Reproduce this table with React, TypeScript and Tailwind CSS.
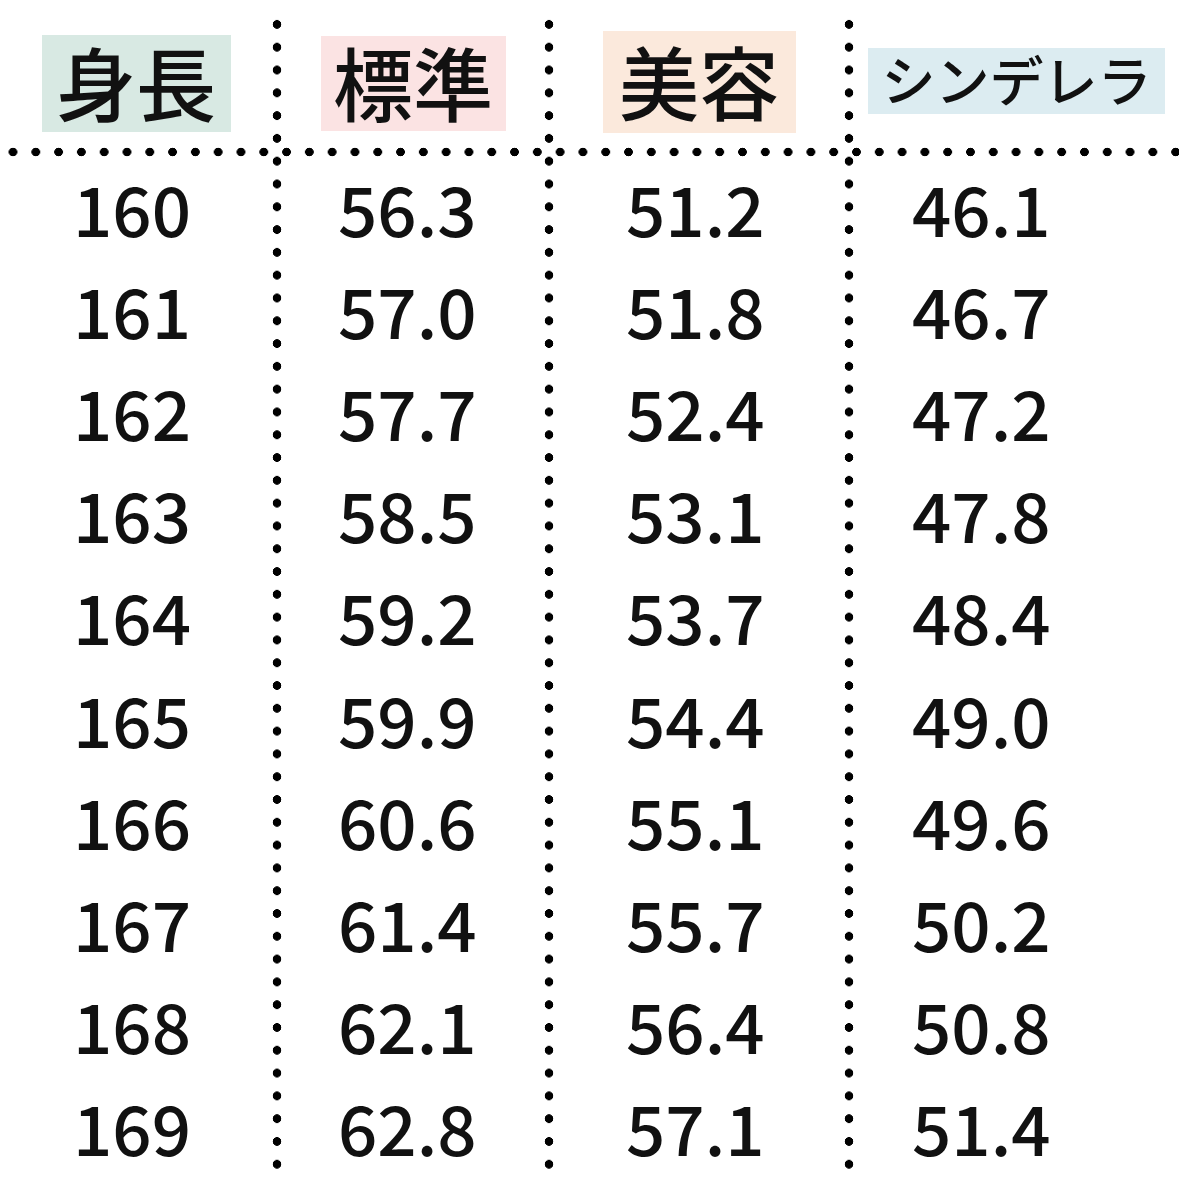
const rows = [
  ['160', '56.3', '51.2', '46.1'],
  ['161', '57.0', '51.8', '46.7'],
  ['162', '57.7', '52.4', '47.2'],
  ['163', '58.5', '53.1', '47.8'],
  ['164', '59.2', '53.7', '48.4'],
  ['165', '59.9', '54.4', '49.0'],
  ['166', '60.6', '55.1', '49.6'],
  ['167', '61.4', '55.7', '50.2'],
  ['168', '62.1', '56.4', '50.8'],
  ['169', '62.8', '57.1', '51.4'],
]

// left padding per data column so the numbers sit where the reference has them
const cellPad = ['pl-[73px]', 'pl-[56px]', 'pl-[72px]', 'pl-[58px]']

const vDots =
  'row-span-full mt-[12.6px] bg-[radial-gradient(circle,#000_4px,transparent_4.6px)] bg-[length:10px_22.8px] bg-repeat-y'

export default function App() {
  return (
    <div className="h-[1179px] w-[1179px] overflow-hidden bg-white text-[#111] font-['Noto_Sans_CJK_JP','Noto_Sans',sans-serif]">
      <div className="grid h-full grid-cols-[272px_10px_262px_10px_290px_10px_1fr] grid-rows-[147px_10px_repeat(10,102.2px)]">
        {/* dotted separators */}
        <div className={`col-start-2 ${vDots}`} />
        <div className={`col-start-4 ${vDots}`} />
        <div className={`col-start-6 ${vDots}`} />
        <div className="col-span-full row-start-2 bg-[radial-gradient(circle,#000_4px,transparent_4.6px)] bg-[length:22.8px_10px] bg-[position:1.6px_0] bg-repeat-x" />

        {/* ── Header ─────────────────────────────── */}
        <div className="flex items-center justify-center pt-[20px]">
          <div className="flex h-[97px] w-[189px] items-center justify-center bg-[#d8e9e3] pb-[8px] text-[80px] font-medium leading-none">
            身長
          </div>
        </div>
        <div className="flex items-center justify-center pt-[20px]">
          <div className="flex h-[95px] w-[185px] items-center justify-center bg-[#fbe3e3] pb-[8px] text-[80px] font-medium leading-none">
            標準
          </div>
        </div>
        <div className="flex items-center justify-center pt-[17px]">
          <div className="flex h-[102px] w-[193px] items-center justify-center bg-[#fbe9dc] pb-[6px] text-[80px] font-medium leading-none">
            美容
          </div>
        </div>
        <div className="flex items-center justify-center pt-[15px]">
          <div className="flex h-[66px] w-[297px] items-center justify-center bg-[#dcecf1] pb-[4px] text-[54px] font-medium leading-none">
            シンデレラ
          </div>
        </div>

        {/* ── Body ───────────────────────────────── */}
        {rows.map(row =>
          row.map((v, i) => (
            <div
              key={`${row[0]}-${i}`}
              className={`flex items-center pb-[2px] text-[69px] font-medium leading-none ${cellPad[i]}`}
            >
              {v}
            </div>
          ))
        )}
      </div>
    </div>
  )
}
